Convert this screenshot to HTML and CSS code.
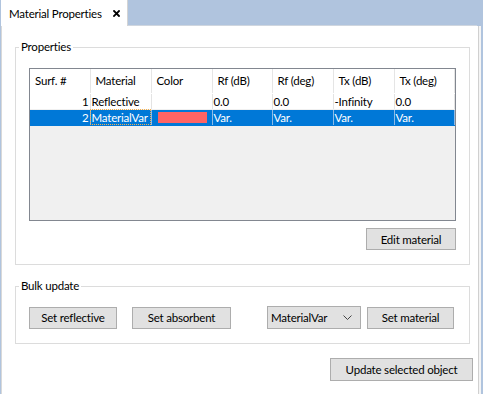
FILE: index.html
```html
<!DOCTYPE html>
<html lang="en">
  <head>
    <meta charset="UTF-8" />
    <meta name="viewport" content="width=device-width, initial-scale=1.0" />
    <title>Material Properties</title>
    <link rel="stylesheet" href="styles.css">
  </head>
  <body>
    <div class="tabbar">
      <div class="tab">
        <span>Material Properties</span>
        <svg class="close" width="7" height="7" viewBox="0 0 7 7">
          <path d="M1 1 L6 6 M6 1 L1 6" stroke="#000" stroke-width="1.8" stroke-linecap="square" />
        </svg>
      </div>
      <div class="tab-fill"></div>
    </div>

    <div class="panel">
      <fieldset class="group group-props">
        <legend>Properties</legend>
        <div class="grid-box">
          <table class="grid">
            <colgroup>
              <col style="width:60px" />
              <col style="width:61px" />
              <col style="width:61px" />
              <col style="width:60px" />
              <col style="width:61px" />
              <col style="width:61px" />
              <col style="width:60px" />
            </colgroup>
            <thead>
              <tr>
                <th>Surf. #</th>
                <th>Material</th>
                <th>Color</th>
                <th>Rf (dB)</th>
                <th>Rf (deg)</th>
                <th>Tx (dB)</th>
                <th>Tx (deg)</th>
              </tr>
            </thead>
            <tbody>
              <tr>
                <td class="num">1</td>
                <td>Reflective</td>
                <td></td>
                <td>0.0</td>
                <td>0.0</td>
                <td>-Infinity</td>
                <td>0.0</td>
              </tr>
              <tr class="selected">
                <td class="num">2</td>
                <td class="focus">MaterialVar</td>
                <td><div class="swatch" style="background:#ff6464"></div></td>
                <td>Var.</td>
                <td>Var.</td>
                <td>Var.</td>
                <td>Var.</td>
              </tr>
            </tbody>
          </table>
        </div>
        <div class="actions">
          <button class="btn btn-edit">Edit material</button>
        </div>
      </fieldset>

      <fieldset class="group group-bulk">
        <legend>Bulk update</legend>
        <div class="bulk-row">
          <button class="btn btn-reflective">Set reflective</button>
          <button class="btn btn-absorbent">Set absorbent</button>
          <div class="combo">
            <span>MaterialVar</span>
            <svg width="9" height="5" viewBox="0 0 9 5">
              <path d="M0.5 0.5 L4.5 4.5 L8.5 0.5" fill="none" stroke="#444" stroke-width="1" />
            </svg>
          </div>
          <button class="btn btn-set">Set material</button>
        </div>
      </fieldset>

      <div class="footer">
        <button class="btn btn-update">Update selected object</button>
      </div>
    </div>
  </body>
</html>
```

FILE: styles.css
```css
* {
  box-sizing: border-box;
}
:root {
  --strip: #b0c4de;
  --line: #dcdcdc;
  --btn-bg: #e1e1e1;
  --btn-border: #adadad;
  --select: #0078d7;
}
body {
  margin: 0;
  background: var(--strip);
  font-family: "Segoe UI", Lato, sans-serif;
  font-size: 11.5px;
  letter-spacing: -0.2px;
  color: #000;
  height: 394px;
  overflow: hidden;
}

/* tab header */
.tabbar {
  display: flex;
  height: 26px;
}
.tab {
  width: 127px;
  background: #fff;
  border-right: 1px solid #d4d4d4;
  display: flex;
  align-items: center;
  padding-left: 8px;
  gap: 11px;
  margin-left: 1px;
  white-space: nowrap;
}
.close {
  margin-top: 1px;
}
.tab-fill {
  width: 349px;
  border-bottom: 1px solid #cfd6df;
}

/* main panel */
.panel {
  width: 478px;
  height: 368px;
  background: #fff;
  border-left: 1px solid #d9d9d9;
  border-right: 1px solid #d0d0d0;
  margin-left: 1px;
  box-shadow: 2px 0 0 #f4f4f4;
  padding: 0 6px 0 13px;
  display: flex;
  flex-direction: column;
}
.group {
  border: 1px solid var(--line);
  margin: 0;
  width: 455px;
  padding: 0 13px;
}
.group legend {
  padding: 0 2px;
  margin-left: -10px;
  line-height: 16px;
}
.group-props {
  margin-top: 13px;
  padding-top: 13px;
  padding-bottom: 14px;
}
.group-bulk {
  margin-top: 13px;
  padding-top: 12px;
  padding-bottom: 14px;
}

/* data grid */
.grid-box {
  border: 1px solid #828790;
  height: 153px;
  background: #f0f0f0;
}
.grid {
  border-collapse: collapse;
  table-layout: fixed;
  width: 424px;
}
.grid th {
  height: 24px;
  background: #fff;
  font-weight: normal;
  text-align: left;
  padding: 0 0 0 5px;
  border-right: 1px solid #e5e5e5;
  border-bottom: 1px solid #fff;
}
.grid td {
  height: 16px;
  background: #fff;
  padding: 0 1px;
  line-height: 15px;
  border-right: 1px solid #e3e3e3;
  border-bottom: 1px solid #f0f0f0;
  white-space: nowrap;
  overflow: hidden;
}
.grid td.num {
  text-align: right;
}
.grid tr.selected td {
  background: var(--select);
  color: #fff;
  border-right-color: #8fbbe6;
  border-bottom-color: var(--select);
}
.grid td.focus {
  outline: 1px dotted #f3b04e;
  outline-offset: -1px;
}
.swatch {
  height: 11px;
  margin: 0 4px 0 5px;
}

/* buttons */
.btn {
  font: inherit;
  letter-spacing: inherit;
  background: var(--btn-bg);
  border: 1px solid var(--btn-border);
  height: 22px;
  padding: 0;
  color: #000;
}
.actions {
  display: flex;
  justify-content: flex-end;
  margin-top: 7px;
}
.btn-edit {
  width: 90px;
}
.bulk-row {
  display: flex;
  align-items: center;
}
.btn-reflective {
  width: 88px;
}
.btn-absorbent {
  width: 99px;
  margin-left: 15px;
}
.combo {
  width: 94px;
  height: 23px;
  margin-left: 36px;
  background: var(--btn-bg);
  border: 1px solid var(--btn-border);
  display: flex;
  align-items: center;
  justify-content: space-between;
  padding: 0 8px 0 3px;
}
.btn-set {
  width: 87px;
  margin-left: 6px;
}
.footer {
  display: flex;
  justify-content: flex-end;
  margin-top: 14px;
  margin-right: -1px;
}
.btn-update {
  width: 143px;
  height: 23px;
}
```
